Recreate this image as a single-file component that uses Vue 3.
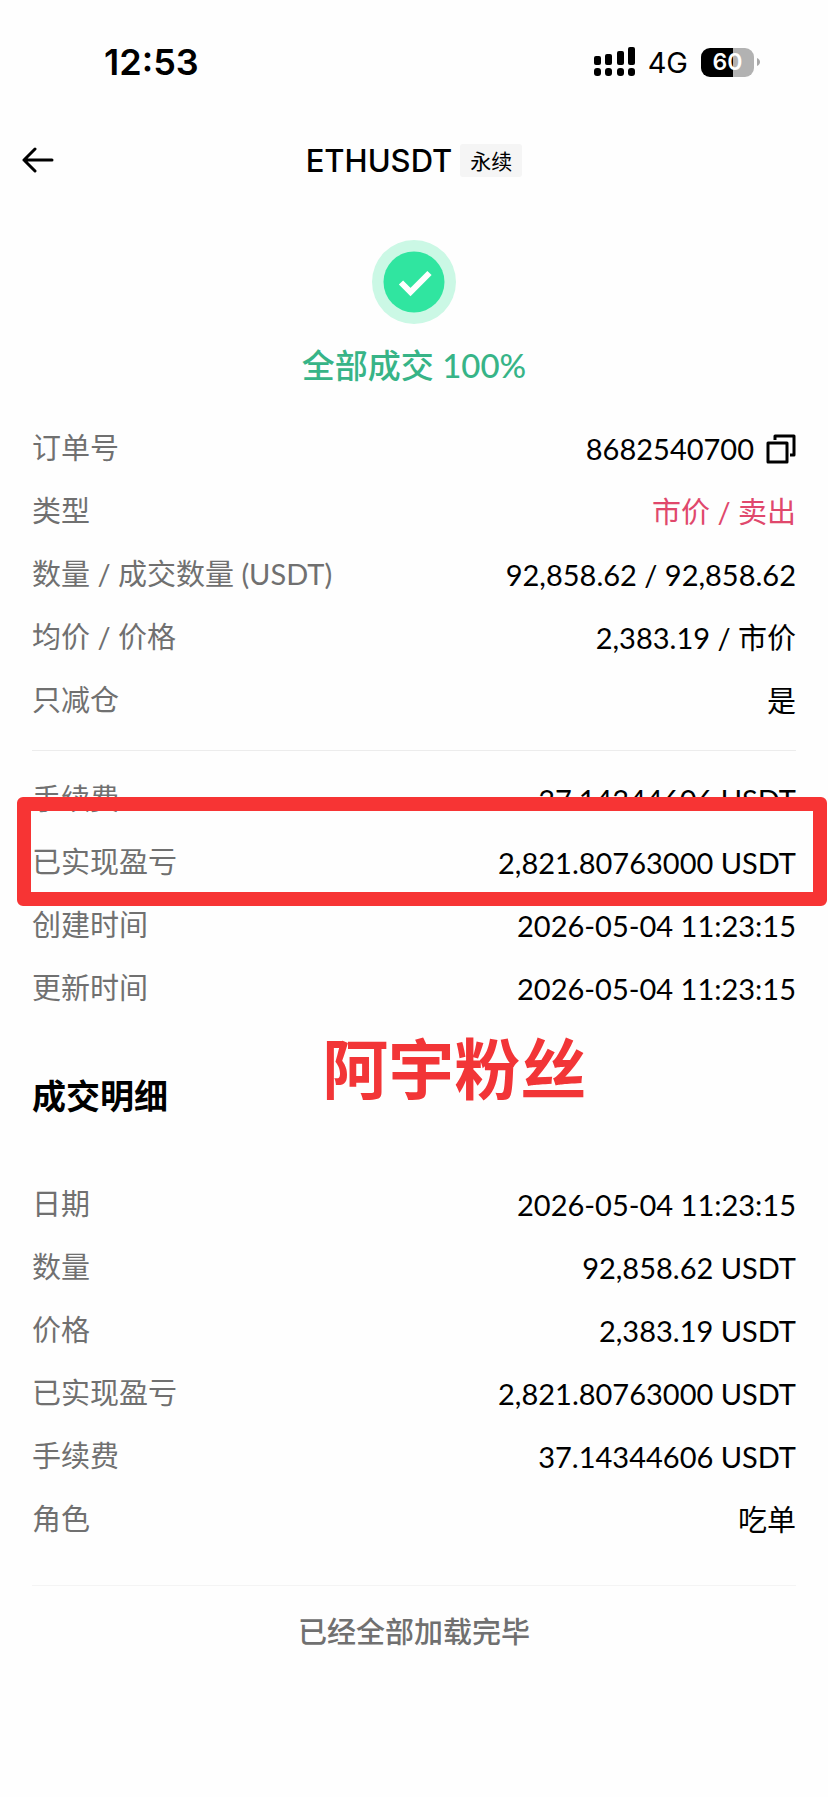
<script setup>
import { ref } from 'vue'

const battery = ref(60)

const order = ref([
  { label: '订单号', value: '8682540700', copy: true },
  { label: '类型', value: '市价 / 卖出', sell: true },
  { label: '数量 / 成交数量 (USDT)', value: '92,858.62 / 92,858.62' },
  { label: '均价 / 价格', value: '2,383.19 / 市价' },
  { label: '只减仓', value: '是' }
])

const result = ref([
  { label: '手续费', value: '37.14344606 USDT' },
  { label: '已实现盈亏', value: '2,821.80763000 USDT', marked: true },
  { label: '创建时间', value: '2026-05-04 11:23:15' },
  { label: '更新时间', value: '2026-05-04 11:23:15' }
])

const fills = ref([
  { label: '日期', value: '2026-05-04 11:23:15' },
  { label: '数量', value: '92,858.62 USDT' },
  { label: '价格', value: '2,383.19 USDT' },
  { label: '已实现盈亏', value: '2,821.80763000 USDT' },
  { label: '手续费', value: '37.14344606 USDT' },
  { label: '角色', value: '吃单' }
])

const copyId = (text) => {
  navigator.clipboard?.writeText(text)
}
</script>

<template>
  <div class="page">
    <div class="status-bar">
      <span class="time">12:53</span>
      <div class="status-icons">
        <svg class="signal" width="42" height="30" viewBox="0 0 42 30" aria-hidden="true">
          <rect x="0" y="9" width="7" height="9" rx="2" />
          <rect x="11" y="7" width="7" height="11" rx="2" />
          <rect x="23" y="4" width="7" height="14" rx="2" />
          <rect x="34" y="0" width="7" height="18" rx="2" />
          <rect x="0" y="21" width="7" height="8" rx="3" />
          <rect x="11" y="21" width="7" height="8" rx="3" />
          <rect x="23" y="21" width="7" height="8" rx="3" />
          <rect x="34" y="21" width="7" height="8" rx="3" />
        </svg>
        <span class="network">4G</span>
        <div class="battery">
          <span class="level">{{ battery }}</span>
          <svg width="3" height="8" viewBox="0 0 3 8" aria-hidden="true">
            <path d="M0 0C2 1 3 2.400 3 4S2 7 0 8Z" fill="#a8a8a8" />
          </svg>
        </div>
      </div>
    </div>

    <header class="nav">
      <button class="back" type="button" aria-label="返回">
        <svg width="32" height="26" viewBox="0 0 32 26" aria-hidden="true">
          <path
            d="M13 2L2 13L13 24M2 13H30"
            fill="none"
            stroke="#000"
            stroke-width="3"
            stroke-linecap="round"
            stroke-linejoin="round"
          />
        </svg>
      </button>
      <h1>ETHUSDT</h1>
      <span class="tag">永续</span>
    </header>

    <main>
      <section class="summary">
        <svg width="84" height="84" viewBox="0 0 84 84" aria-hidden="true">
          <circle cx="42" cy="42" r="42" fill="#cbf8e5" />
          <circle cx="42" cy="42" r="30.500" fill="#30e5a0" />
          <path d="M29 42.500L38.500 52L57.500 33" fill="none" stroke="#fff" stroke-width="6" />
        </svg>
        <p>全部成交 100%</p>
      </section>

      <dl class="rows">
        <div v-for="row in order" :key="row.label" class="row">
          <dt>{{ row.label }}</dt>
          <dd :class="{ sell: row.sell }">
            {{ row.value }}
            <button
              v-if="row.copy"
              class="copy"
              type="button"
              aria-label="复制"
              @click="copyId(row.value)"
            >
              <svg width="30" height="30" viewBox="0 0 30 30" aria-hidden="true">
                <g fill="none" stroke="#000" stroke-width="3" stroke-linejoin="round">
                  <rect x="2" y="9" width="19" height="19" />
                  <path d="M9 6V2H28V21H24" />
                </g>
              </svg>
            </button>
          </dd>
        </div>
      </dl>

      <dl class="rows divided">
        <div v-for="row in result" :key="row.label" class="row" :class="{ marked: row.marked }">
          <dt>{{ row.label }}</dt>
          <dd>{{ row.value }}</dd>
        </div>
      </dl>

      <div class="fills-head">
        <h2>成交明细</h2>
        <span class="note">阿宇粉丝</span>
      </div>

      <dl class="rows">
        <div v-for="row in fills" :key="row.label" class="row">
          <dt>{{ row.label }}</dt>
          <dd>{{ row.value }}</dd>
        </div>
      </dl>
    </main>

    <footer>已经全部加载完毕</footer>
  </div>
</template>

<style>
body {
  margin: 0;
  background: #fefefe;
}
</style>

<style scoped>
.page {
  min-height: 100vh;
  box-sizing: border-box;
  padding: 0 32px;
  color: #000;
  font-family: Lato, 'Noto Sans CJK SC', sans-serif;
  font-size: 29px;
}

h1,
h2,
p,
dl,
dd {
  margin: 0;
}

button {
  display: flex;
  padding: 0;
  border: 0;
  background: none;
  cursor: pointer;
}

.status-bar {
  display: flex;
  justify-content: space-between;
  align-items: center;
  height: 124px;
  padding: 0 36px 0 72px;
  font-family: Inter, sans-serif;
}

.time {
  font-size: 36px;
  font-weight: 600;
}

.status-icons {
  display: flex;
  align-items: center;
}

.network {
  margin: 0 13px 0 12px;
  font-size: 29px;
}

.battery {
  display: flex;
  align-items: center;
  gap: 3px;
}

.level {
  width: 53px;
  border-radius: 9px;
  background: linear-gradient(to right, #000 60%, #b2b2b2 60%);
  color: #fff;
  font-size: 23px;
  font-weight: 600;
  line-height: 29px;
  text-align: center;
}

.nav {
  position: relative;
  display: flex;
  justify-content: center;
  align-items: center;
  gap: 8px;
  height: 72px;
}

.back {
  position: absolute;
  left: -10px;
}

h1 {
  font-family: Inter, sans-serif;
  font-size: 31px;
  font-weight: 500;
}

.tag {
  padding: 0 10px;
  border-radius: 3px;
  background: #f5f5f5;
  font-size: 21px;
  line-height: 33px;
}

.summary {
  display: flex;
  flex-direction: column;
  align-items: center;
  gap: 19px;
  padding: 44px 0 30px;
  color: #37b487;
}

.summary p {
  font-size: 33px;
  font-weight: 500;
  line-height: 44px;
}

.row {
  position: relative;
  display: flex;
  justify-content: space-between;
  align-items: center;
  height: 63px;
  line-height: 42px;
}

dt {
  padding-bottom: 2px;
  color: #707070;
}

dd {
  display: flex;
  align-items: center;
  gap: 12px;
}

.sell {
  color: #e0486c;
}

.divided {
  margin-top: 18px;
  padding-top: 17px;
  border-top: 1px solid #ececec;
}

/* hand-drawn highlight round the realised profit */
.marked::after {
  content: '';
  position: absolute;
  top: -34px;
  right: -31px;
  bottom: -12px;
  left: -15px;
  border: 14px solid #f73434;
  border-radius: 6px;
}

.fills-head {
  position: relative;
  margin: 52px 0 53px;
}

h2 {
  font-size: 34px;
  font-weight: 700;
  line-height: 48px;
}

.note {
  position: absolute;
  top: -51px;
  left: 38%;
  color: #f23537;
  font-size: 66px;
  font-weight: 700;
  line-height: 96px;
}

footer {
  margin-top: 34px;
  padding: 24px 0;
  border-top: 1px solid #f4f4f4;
  color: #707070;
  font-weight: 500;
  line-height: 44px;
  text-align: center;
}
</style>
